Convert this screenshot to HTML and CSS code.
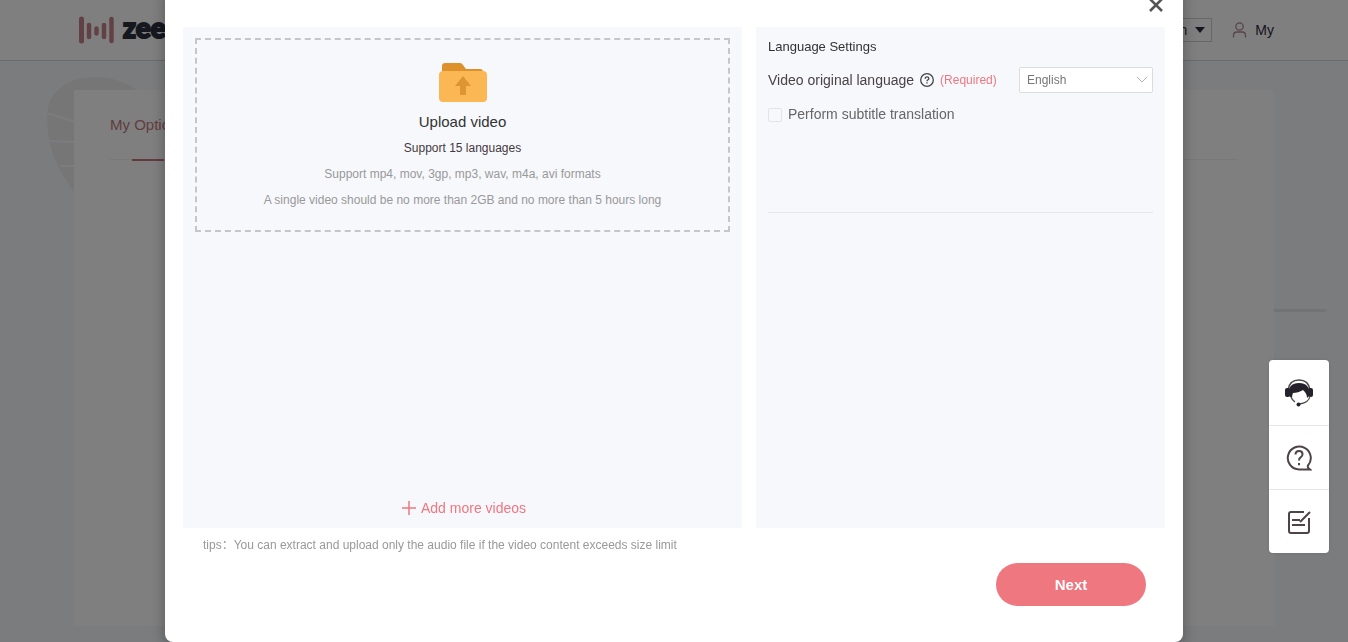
FILE: index.html
```html
<!DOCTYPE html>
<html lang="en">
<head>
    <meta charset="UTF-8">
    <meta name="viewport" content="width=device-width, initial-scale=1.0">
    <title>Zeemo - Upload video</title>
    <link rel="stylesheet" href="styles.css">
</head>
<body>
    <header class="topbar">
        <a class="logo" href="#">
            <svg width="36" height="28" viewBox="0 0 36 28" fill="none" stroke="#c4838b" stroke-linecap="round">
                <path d="M3.500 3v22" stroke-width="5"/>
                <path d="M11 9v12" stroke-width="4.500"/>
                <path d="M18.500 12.500v5" stroke-width="4.500"/>
                <path d="M26 9v12" stroke-width="4.500"/>
                <path d="M33.500 3v22" stroke-width="4.500"/>
            </svg>
            <span class="logo-text">zeemo</span>
        </a>
        <nav class="topbar-nav">
            <button class="lang-button" type="button">English
                <svg width="10" height="6" viewBox="0 0 10 6"><path d="M0 0h10L5 6z" fill="#2b2b40"/></svg>
            </button>
            <a class="account" href="#">
                <svg width="15" height="16" viewBox="0 0 15 16" fill="none" stroke="#b08a90" stroke-width="1.300">
                    <circle cx="7.500" cy="4.500" r="3.700"/>
                    <path d="M1.500 15.500v-2q0-3.500 3.500-3.500h5q3.500 0 3.500 3.500v2"/>
                </svg>
                My
            </a>
        </nav>
    </header>

    <main class="page">
        <svg class="balloon" width="104" height="140" viewBox="0 0 104 140">
            <path d="M48 0C18 0 0 17 0 40c0 36 14 58 34 84 8 10 28 10 36 0 20-26 34-48 34-84C104 17 78 0 48 0z" fill="#ecedee"/>
            <path d="M0 36l50 16M3 64l50 2M13 89h50" stroke="#f6f8fc" stroke-width="2"/>
        </svg>
        <div class="side-line"></div>
        <section class="card">
            <div class="tabs">
                <a class="tab" href="#">My Options</a>
            </div>
        </section>
    </main>

    <div class="overlay">
        <div class="modal" role="dialog" aria-label="Upload video">
            <div class="modal-header">
                <button class="close" type="button" aria-label="Close">
                    <svg width="16" height="16" viewBox="0 0 16 16" stroke="#555" stroke-width="2.600"><path d="M2 2l12 12M14 2L2 14"/></svg>
                </button>
            </div>
            <div class="modal-body">
                <section class="panel upload-panel">
                    <button class="dropzone" type="button">
                        <svg class="folder" width="48" height="39" viewBox="0 0 48 39">
                            <path d="M3 11V3q0-3 3-3h15q2 0 3 2l3 4h14q3 0 3 3v3z" fill="#dd912b"/>
                            <rect x="0" y="8" width="48" height="31" rx="4" fill="#fcb755"/>
                            <path d="M24 13l8 10h-5v9h-6v-9h-5z" fill="#dd9433"/>
                        </svg>
                        <span class="drop-title">Upload video</span>
                        <span class="drop-sub">Support 15 languages</span>
                        <span class="drop-hint">Support mp4, mov, 3gp, mp3, wav, m4a, avi formats</span>
                        <span class="drop-hint">A single video should be no more than 2GB and no more than 5 hours long</span>
                    </button>
                    <button class="add-more" type="button">
                        <svg width="14" height="14" viewBox="0 0 14 14" stroke="#ee7780" stroke-width="1.500"><path d="M7 0v14M0 7h14"/></svg>
                        Add more videos
                    </button>
                </section>
                <section class="panel settings-panel">
                    <h2 class="settings-title">Language Settings</h2>
                    <div class="setting-row">
                        <label for="language">Video original language</label>
                        <svg width="14" height="14" viewBox="0 0 14 14" fill="none" stroke="#444" stroke-width="1.300">
                            <circle cx="7" cy="7" r="6.300"/>
                            <path d="M5.200 5.700q0-1.900 1.800-1.900t1.800 1.600q0 .9-.9 1.400-.9.400-.9 1.400M7 9.200v1.400"/>
                        </svg>
                        <span class="required">(Required)</span>
                        <select class="select" id="language">
                            <option>English</option>
                        </select>
                    </div>
                    <div class="check-row">
                        <input class="checkbox" type="checkbox" id="translate">
                        <label for="translate">Perform subtitle translation</label>
                    </div>
                </section>
            </div>
            <p class="tips">tips：You can extract and upload only the audio file if the video content exceeds size limit</p>
            <div class="modal-footer">
                <button class="next" type="button">Next</button>
            </div>
        </div>
    </div>

    <aside class="toolbar">
        <button class="tool" type="button" aria-label="Customer service">
            <svg width="28" height="28" viewBox="0 0 28 28" fill="none">
                <path d="M3 11C4 4 8 1 14 1s10 3 11 10" stroke="#50484c" stroke-width="1.600"/>
                <path d="M4 17C2 8 7 4 14 4s12 4 10 13l-2 2c0-4-2-6-4-8-3 2-7 3-10 3q-1 2-1 5z" fill="#26222c"/>
                <rect x="0" y="9" width="5" height="9" rx="2" fill="#26222c"/>
                <rect x="23" y="9" width="5" height="9" rx="2" fill="#26222c"/>
                <path d="M6 18q1 3 4 5M25 17q-1 7-11 8" stroke="#50484c" stroke-width="1.300"/>
                <circle cx="13.500" cy="25.500" r="2" fill="#26222c"/>
            </svg>
        </button>
        <button class="tool" type="button" aria-label="Help">
            <svg width="26" height="26" viewBox="0 0 26 26" fill="none" stroke="#4e4347" stroke-width="2">
                <path d="M24 24.500H13A11.500 11.500 0 1 1 22 20.500q-1 2 2 4z"/>
                <path d="M9.500 9.500q0-3.500 3.500-3.500t3.500 3.200q0 1.800-1.700 3-1.800 1.100-1.800 3.300M13 18v2.200"/>
            </svg>
        </button>
        <button class="tool" type="button" aria-label="Feedback">
            <svg width="24" height="24" viewBox="0 0 24 24" fill="none" stroke="#4e4347" stroke-width="2">
                <path d="M17 2H4Q2 2 2 4v17q0 2 2 2h16q2 0 2-2V8"/>
                <path d="M5 10h8M5 15h13M13 12L23 2"/>
            </svg>
        </button>
    </aside>
</body>
</html>
```
FILE: styles.css
```css
* {
    box-sizing: border-box;
}

body {
    margin: 0;
    min-height: 100vh;
    overflow: hidden;
    background-color: #f6f8fc;
    color: #333;
    font-family: "Liberation Sans", Arial, "Noto Sans CJK SC", sans-serif;
    font-size: 14px;
}

button {
    padding: 0;
    border: none;
    background: none;
    font: inherit;
    cursor: pointer;
}

a {
    color: inherit;
    text-decoration: none;
}

svg {
    display: block;
    flex-shrink: 0;
}

/* Page behind the dialog */
.topbar {
    display: flex;
    justify-content: space-between;
    align-items: center;
    height: 61px;
    padding: 0 74px 0 78px;
    border-bottom: 1px solid #d4d6da;
    background-color: #fff;
}

.logo {
    display: flex;
    align-items: center;
    gap: 9px;
}

.logo-text {
    color: #2c3040;
    font-family: Lato, sans-serif;
    font-size: 28px;
    font-weight: 900;
    line-height: 32px;
    padding-bottom: 6px;
    -webkit-text-stroke: 2px #2c3040;
}

.topbar-nav {
    display: flex;
    align-items: center;
    gap: 20px;
}

.lang-button {
    display: flex;
    align-items: center;
    justify-content: flex-end;
    gap: 8px;
    width: 112px;
    height: 24px;
    padding-right: 6px;
    border: 1px solid #d0d0d4;
    color: #333;
}

.account {
    display: flex;
    align-items: center;
    gap: 8px;
    color: #2e2a38;
}

.page {
    position: relative;
    padding: 29px 24px 0;
}

.balloon {
    position: absolute;
    top: 16px;
    left: 47px;
}

/* Thin shadow line beside the card */
.side-line {
    position: absolute;
    top: 248px;
    right: 22px;
    width: 52px;
    height: 3px;
    border-radius: 2px;
    background-color: #e4e6e9;
}

.card {
    position: relative;
    max-width: 1200px;
    height: calc(100vh - 106px);
    margin: 0 auto;
    padding: 20px 36px;
    background-color: #fff;
}

.tabs {
    border-bottom: 1px solid #f0f0f0;
}

.tab {
    position: relative;
    display: inline-block;
    line-height: 30px;
    padding-bottom: 19px;
    color: #c47a82;
    font-size: 15px;
}

.tab::after {
    content: "";
    position: absolute;
    bottom: -2px;
    left: 22px;
    width: 32px;
    height: 2px;
    background-color: #c4737e;
}

/* Dialog */
.overlay {
    position: fixed;
    inset: 0;
    display: flex;
    justify-content: center;
    align-items: flex-end;
    background-color: rgba(0, 0, 0, 0.5);
}

.modal {
    width: 100%;
    max-width: 1018px;
    padding: 0 18px 36px;
    border-radius: 8px;
    background-color: #fff;
    box-shadow: 0 5px 15px rgba(0, 0, 0, 0.3);
}

.modal-header {
    display: flex;
    justify-content: flex-end;
    align-items: center;
    height: 44px;
    padding-right: 1px;
}

.modal-body {
    display: grid;
    grid-template-columns: 559fr 409fr;
    gap: 14px;
}

.panel {
    min-height: 501px;
    padding: 11px 12px;
    background-color: #f7f8fc;
}

.upload-panel {
    display: flex;
    flex-direction: column;
    justify-content: space-between;
}

.dropzone {
    display: flex;
    flex-direction: column;
    align-items: center;
    padding: 23px 0 17px;
    border: 2px dashed #c6c6c8;
    line-height: 26px;
    font-size: 12px;
}

.folder {
    margin-bottom: 7px;
}

.drop-title {
    color: #333;
    font-size: 15px;
}

.drop-sub {
    color: #44393d;
}

.drop-hint {
    color: #999;
}

.add-more {
    display: flex;
    align-items: center;
    align-self: center;
    gap: 5px;
    padding-left: 3px;
    color: #ee7780;
    line-height: 18px;
}

.settings-title {
    margin: 0;
    line-height: 18px;
    font-size: 13px;
    font-weight: normal;
}

.settings-panel {
    font-size: 14px;
}

.setting-row {
    display: flex;
    align-items: center;
    gap: 6px;
    margin: 11px 0 10px;
    color: #4b4245;
}

.required {
    color: #ee7780;
    font-size: 12px;
}

.select {
    width: 134px;
    height: 26px;
    margin-left: auto;
    padding: 0 7px;
    border: 1px solid #dcdcdf;
    border-radius: 2px;
    appearance: none;
    background: #fff url("data:image/svg+xml,%3Csvg xmlns='http://www.w3.org/2000/svg' width='12' height='8' fill='none' stroke='%23b4b4b8'%3E%3Cpath d='M1 1l5 5 5-5'/%3E%3C/svg%3E") no-repeat right 4px center;
    color: #777;
    font-family: inherit;
    font-size: 12px;
}

.check-row {
    display: flex;
    align-items: center;
    gap: 6px;
    height: 110px;
    padding-bottom: 88px;
    border-bottom: 1px solid #e6e7eb;
    color: #666;
}

.checkbox {
    appearance: none;
    width: 14px;
    height: 14px;
    margin: 3px 0 0;
    border: 1px solid #e4e4e8;
    border-radius: 2px;
}

.tips {
    margin: 8px 20px 9px;
    color: #999;
    font-size: 12px;
    line-height: 18px;
}

.modal-footer {
    display: flex;
    justify-content: flex-end;
    padding-right: 19px;
}

.next {
    width: 150px;
    height: 43px;
    border-radius: 22px;
    background-color: #ee7780;
    color: #fff;
    font-size: 15px;
    font-weight: bold;
}

/* Floating tools on the right */
.toolbar {
    position: fixed;
    top: 360px;
    right: 19px;
    width: 60px;
    border-radius: 4px;
    background-color: #fff;
    box-shadow: 0 0 4px rgba(0, 0, 0, 0.1);
}

.tool {
    display: flex;
    align-items: center;
    justify-content: center;
    width: 100%;
    height: 64px;
}

.tool:first-child {
    height: 65px;
}

.tool + .tool {
    border-top: 1px solid #e6e6e6;
}
```
